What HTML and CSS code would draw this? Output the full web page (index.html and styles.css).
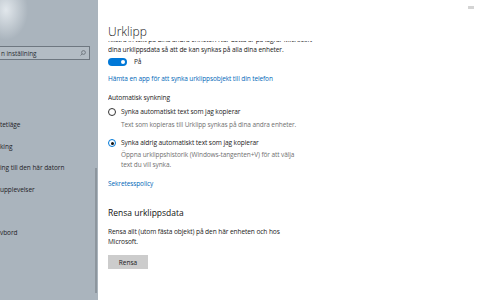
FILE: index.html
```html
<!DOCTYPE html>
<html lang="sv">
<head>
<meta charset="utf-8">
<link rel="stylesheet" href="styles.css">
</head>
<body>
<aside class="sidebar">
  <div class="search">
    <span class="search-text">n inställning</span>
    <svg class="search-icon" width="6" height="6" viewBox="0 0 12 12"><circle cx="7" cy="5" r="3.8" fill="none" stroke="#5b636a" stroke-width="1.4"/><line x1="4.2" y1="7.8" x2="1" y2="11" stroke="#5b636a" stroke-width="1.4"/></svg>
  </div>
  <ul class="nav">
    <li>tetläge</li>
    <li>king</li>
    <li>ing till den här datorn</li>
    <li>upplevelser</li>
    <li></li>
    <li>vbord</li>
  </ul>
  <div class="scrollbar"></div>
</aside>
<main class="main">
  <span class="winctl"></span>
  <h1 class="title">Urklipp</h1>
  <div class="scroll">
    <p class="text first">Klistra in text på dina andra enheter. När detta är på lagrar Microsoft<br>dina urklippsdata så att de kan synkas på alla dina enheter.</p>
    <div class="toggle-row">
      <span class="toggle"><span class="knob"></span></span>
      <span class="text">På</span>
    </div>
    <a class="link m-link">Hämta en app för att synka urklippsobjekt till din telefon</a>
    <p class="text m-auto">Automatisk synkning</p>
    <div class="radio-row m-r1">
      <span class="radio"></span>
      <span class="text">Synka automatiskt text som jag kopierar</span>
    </div>
    <p class="text sub m-s1">Text som kopieras till Urklipp synkas på dina andra enheter.</p>
    <div class="radio-row m-r2">
      <span class="radio checked"></span>
      <span class="text">Synka aldrig automatiskt text som jag kopierar</span>
    </div>
    <p class="text sub m-s2">Öppna urklippshistorik (Windows-tangenten+V) för att välja<br>text du vill synka.</p>
    <a class="link m-priv">Sekretesspolicy</a>
    <h2 class="heading">Rensa urklippsdata</h2>
    <p class="text m-clear">Rensa allt (utom fästa objekt) på den här enheten och hos<br>Microsoft.</p>
    <button class="button">Rensa</button>
  </div>
</main>
</body>
</html>
```
FILE: styles.css
```css
html, body {
  margin: 0;
  padding: 0;
}
body {
  width: 480px;
  height: 300px;
  overflow: hidden;
  display: flex;
  font-family: "Open Sans", "Noto Sans", sans-serif;
  color: #1a1a1a;
}
.sidebar {
  width: 98px;
  flex: none;
  position: relative;
  overflow: hidden;
  background:
    radial-gradient(ellipse 22px 30px at 6px 10px, rgba(235,240,244,0.85), rgba(235,240,244,0) 100%),
    #aab4bd;
}
.search {
  margin: 46px 8px 0 -20px;
  height: 14px;
  box-sizing: border-box;
  border: 1px solid #6e7780;
  background: #b3bcc4;
  display: flex;
  align-items: center;
  padding: 0 3px 0 20px;
}
.search-text {
  flex: 1;
  font-size: 6.4px;
  letter-spacing: -0.05px;
  color: #2a2e33;
  white-space: nowrap;
}
.search-icon {
  flex: none;
}
.nav {
  list-style: none;
  margin: 54px 0 0;
  padding: 0;
}
.nav li {
  height: 21.5px;
  line-height: 21.5px;
  font-size: 6.5px;
  letter-spacing: -0.05px;
  color: #1e2226;
  white-space: nowrap;
}
.scrollbar {
  position: absolute;
  right: 1px;
  top: 168px;
  width: 2px;
  height: 125px;
  background: #8d969e;
}
.main {
  flex: 1;
  background: #fff;
  position: relative;
  display: flex;
  flex-direction: column;
  padding-left: 10px;
  overflow: hidden;
}
.winctl {
  position: absolute;
  right: 6px;
  top: 6px;
  width: 6px;
  height: 3px;
  background: #d4d4d4;
}
.title {
  margin: 24px 0 0;
  height: 17px;
  line-height: 16px;
  font-size: 12px;
  font-weight: 300;
  color: #111;
  flex: none;
}
.scroll {
  flex: 1;
  overflow: hidden;
  display: flex;
  flex-direction: column;
  align-items: flex-start;
}
.text {
  margin: 0;
  font-size: 6.6px;
  letter-spacing: -0.1px;
  line-height: 10px;
  color: #1a1a1a;
  white-space: nowrap;
}
.first { margin-top: -6px; }
.sub { color: #707070; margin-left: 13px; font-size: 6.5px; }
.toggle-row {
  margin-top: 3px;
  display: flex;
  align-items: center;
  gap: 7px;
  height: 8px;
}
.toggle {
  width: 19px;
  height: 8px;
  border-radius: 4px;
  background: #0078d7;
  display: flex;
  align-items: center;
  justify-content: flex-end;
  padding-right: 2px;
  box-sizing: border-box;
}
.knob {
  width: 4px;
  height: 4px;
  border-radius: 50%;
  background: #fff;
}
.link {
  font-size: 6.5px;
  letter-spacing: -0.1px;
  line-height: 10px;
  color: #0067b8;
}
.m-link { margin-top: 8px; }
.m-auto { margin-top: 9px; }
.radio-row {
  display: flex;
  align-items: center;
  gap: 5px;
  height: 10px;
}
.m-r1 { margin-top: 4px; }
.m-s1 { margin-top: 3px; }
.m-r2 { margin-top: 8px; }
.m-s2 { margin-top: 2px; }
.m-priv { margin-top: 9px; }
.radio {
  width: 8px;
  height: 8px;
  box-sizing: border-box;
  border: 1px solid #333;
  border-radius: 50%;
  display: flex;
  align-items: center;
  justify-content: center;
}
.radio.checked {
  border-color: #0078d7;
}
.radio.checked::after {
  content: "";
  width: 3px;
  height: 3px;
  border-radius: 50%;
  background: #111;
}
.heading {
  margin: 18px 0 0;
  font-size: 8.5px;
  line-height: 12px;
  font-weight: 400;
  color: #111;
}
.m-clear { margin-top: 8px; }
.button {
  margin-top: 8px;
  width: 40px;
  height: 14px;
  border: none;
  background: #cccccc;
  font-family: inherit;
  font-size: 6.5px;
  color: #1a1a1a;
  padding: 0;
}
```
